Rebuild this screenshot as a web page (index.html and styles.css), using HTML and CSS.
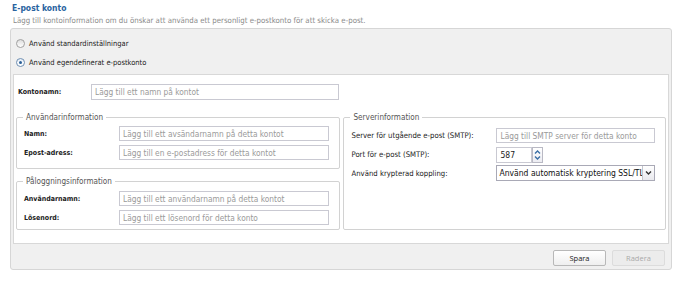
FILE: index.html
```html
<!doctype html>
<html lang="sv">
<head>
    <meta charset="utf-8">
    <title>E-post konto</title>
    <link rel="stylesheet" href="styles.css">
</head>
<body>
    <div class="page">
        <h1 class="title">E-post konto</h1>
        <p class="subtitle">Lägg till kontoinformation om du önskar att använda ett personligt e-postkonto för att skicka e-post.</p>
        <div class="panel">
            <div class="choices">
                <label class="choice"><span class="radio"></span>Använd standardinställningar</label>
                <label class="choice"><span class="radio checked"></span>Använd egendefinerat e-postkonto</label>
            </div>
            <div class="account">
                <div class="row name-row">
                    <span class="label">Kontonamn:</span>
                    <input type="text" class="field name-field" placeholder="Lägg till ett namn på kontot">
                </div>
                <div class="columns">
                    <div class="col-left">
                        <fieldset class="group">
                            <legend>Användarinformation</legend>
                            <div class="row">
                                <span class="label">Namn:</span>
                                <input type="text" class="field" placeholder="Lägg till ett avsändarnamn på detta kontot">
                            </div>
                            <div class="row">
                                <span class="label">Epost-adress:</span>
                                <input type="text" class="field" placeholder="Lägg till en e-postadress för detta kontot">
                            </div>
                        </fieldset>
                        <fieldset class="group login">
                            <legend>Påloggningsinformation</legend>
                            <div class="row">
                                <span class="label">Användarnamn:</span>
                                <input type="text" class="field" placeholder="Lägg till ett användarnamn på detta kontot">
                            </div>
                            <div class="row">
                                <span class="label">Lösenord:</span>
                                <input type="text" class="field" placeholder="Lägg till ett lösenord för detta konto">
                            </div>
                        </fieldset>
                    </div>
                    <fieldset class="group server">
                        <legend>Serverinformation</legend>
                        <div class="row">
                            <span class="label">Server för utgående e-post (SMTP):</span>
                            <input type="text" class="field" placeholder="Lägg till SMTP server för detta konto">
                        </div>
                        <div class="row">
                            <span class="label">Port för e-post (SMTP):</span>
                            <div class="spinner">
                                <input type="text" class="field port" value="587">
                                <span class="spin-buttons">
                                    <svg width="9" height="14" viewBox="0 0 9 14">
                                        <path d="M2 5.5 L4.5 3 L7 5.5" fill="none" stroke="#3a6ea5" stroke-width="1.4"/>
                                        <path d="M2 8.5 L4.5 11 L7 8.5" fill="none" stroke="#3a6ea5" stroke-width="1.4"/>
                                    </svg>
                                </span>
                            </div>
                        </div>
                        <div class="row">
                            <span class="label">Använd krypterad koppling:</span>
                            <div class="select">
                                <span class="select-text">Använd automatisk kryptering SSL/TL</span>
                                <span class="select-arrow">
                                    <svg width="9" height="8" viewBox="0 0 9 8">
                                        <path d="M2 2.5 L4.5 5 L7 2.5" fill="none" stroke="#333" stroke-width="1.4"/>
                                    </svg>
                                </span>
                            </div>
                        </div>
                    </fieldset>
                </div>
            </div>
            <div class="footer">
                <button type="button" class="btn">Spara</button>
                <button type="button" class="btn" disabled>Radera</button>
            </div>
        </div>
    </div>
</body>
</html>
```

FILE: styles.css
```css
body {
    margin: 0;
    background-color: #ffffff;
    font-family: "DejaVu Sans Condensed", "DejaVu Sans", sans-serif;
    color: #222;
}
.page {
    padding: 2px 10px 0 10px;
}
.title {
    margin: 0;
    padding-left: 2px;
    font-size: 8.5px;
    line-height: 12px;
    font-weight: bold;
    color: #2a64a0;
}
.subtitle {
    margin: 2px 0 0 0;
    padding-left: 3px;
    font-size: 7.8px;
    line-height: 10px;
    color: #8a8a8a;
    white-space: nowrap;
}
.panel {
    margin-top: 2px;
    width: 662px;
    height: 242px;
    box-sizing: border-box;
    border: 1px solid #d6d6d6;
    border-radius: 3px;
    background-color: #f0f0f0;
    display: flex;
    flex-direction: column;
}
.choices {
    padding: 5px 0 2px 5px;
}
.choice {
    display: flex;
    align-items: center;
    height: 19px;
    font-size: 7.5px;
    color: #222;
}
.radio {
    width: 7px;
    height: 7px;
    margin-right: 4px;
    border: 1px solid #a0a0a0;
    border-radius: 50%;
    background: linear-gradient(#dedede, #ffffff);
    position: relative;
}
.radio.checked {
    border-color: #7090b3;
    background: linear-gradient(#e6eef7, #ffffff);
}
.radio.checked::after {
    content: "";
    position: absolute;
    left: 2px;
    top: 2px;
    width: 3px;
    height: 3px;
    border-radius: 50%;
    background-color: #2b5f96;
}
.account {
    margin: 0 2px;
    height: 170px;
    box-sizing: border-box;
    border: 1px solid #d8d8d8;
    background-color: #ffffff;
    padding: 9px 2px 0 1px;
}
.row {
    display: flex;
    align-items: center;
    height: 15px;
}
.row + .row {
    margin-top: 4px;
}
.label {
    font-size: 7px;
    font-weight: bold;
    color: #222;
    flex-shrink: 0;
}
.name-row {
    height: 16px;
    padding-left: 3px;
}
.name-row .label {
    width: 73px;
}
.field {
    box-sizing: border-box;
    height: 100%;
    width: 210px;
    margin: 0;
    padding: 0 3px;
    border: 1px solid #c9c9d2;
    border-radius: 0;
    font-family: inherit;
    font-size: 8.3px;
    color: #222;
    background-color: #ffffff;
}
.field::placeholder {
    color: #9a9a9a;
}
.name-field {
    width: 248px;
}
.columns {
    display: flex;
    margin-top: 11px;
}
.col-left {
    width: 325px;
    margin-left: 1px;
}
.group {
    margin: 0;
    padding: 3px 8px 8px 6px;
    border: 1px solid #d2d2d2;
    border-radius: 2px;
}
.group legend {
    padding: 0 3px;
    font-size: 8.1px;
    line-height: 12px;
    color: #555;
}
.group .label {
    width: 95px;
    padding-left: 1px;
}
.login {
    margin-top: 6px;
    padding-top: 4px;
    padding-bottom: 4px;
}
.server {
    width: 323px;
    box-sizing: border-box;
    margin-left: 3px;
    padding-top: 5px;
    padding-bottom: 3px;
}
.server .row:last-child {
    height: 16px;
    margin-top: 3px;
}
.server .label {
    width: 145px;
    font-weight: normal;
    font-size: 7.7px;
}
.server .field {
    width: 159px;
}
.spinner {
    display: flex;
    height: 16px;
}
.server .field.port {
    width: 36px;
    height: 16px;
    font-size: 8.5px;
}
.spin-buttons {
    width: 11px;
    height: 16px;
    box-sizing: border-box;
    border: 1px solid #b9b9c4;
    background: linear-gradient(#ffffff, #ececf2);
    display: flex;
    align-items: center;
    justify-content: center;
}
.select {
    width: 159px;
    height: 16px;
    box-sizing: border-box;
    border: 1px solid #a9a9b6;
    display: flex;
    align-items: center;
    overflow: hidden;
}
.select-text {
    flex: 1;
    padding-left: 2px;
    font-size: 8.5px;
    white-space: nowrap;
    overflow: hidden;
    color: #111;
}
.select-arrow {
    width: 11px;
    height: 14px;
    border-left: 1px solid #c4c4cc;
    background: linear-gradient(#ffffff, #e9e9ee);
    display: flex;
    align-items: center;
    justify-content: center;
}
.footer {
    flex: 1;
    display: flex;
    justify-content: flex-end;
    gap: 6px;
    padding: 6px 6px 0 0;
}
.btn {
    width: 53px;
    height: 16px;
    box-sizing: border-box;
    padding: 0;
    border: 1px solid #b8b8b8;
    border-radius: 2px;
    background: linear-gradient(#ffffff, #efefef);
    font-family: "Open Sans", sans-serif;
    font-size: 7.5px;
    color: #222;
}
.btn:disabled {
    border-color: #dcdcdc;
    background: #ececec;
    color: #aaa;
}
```
